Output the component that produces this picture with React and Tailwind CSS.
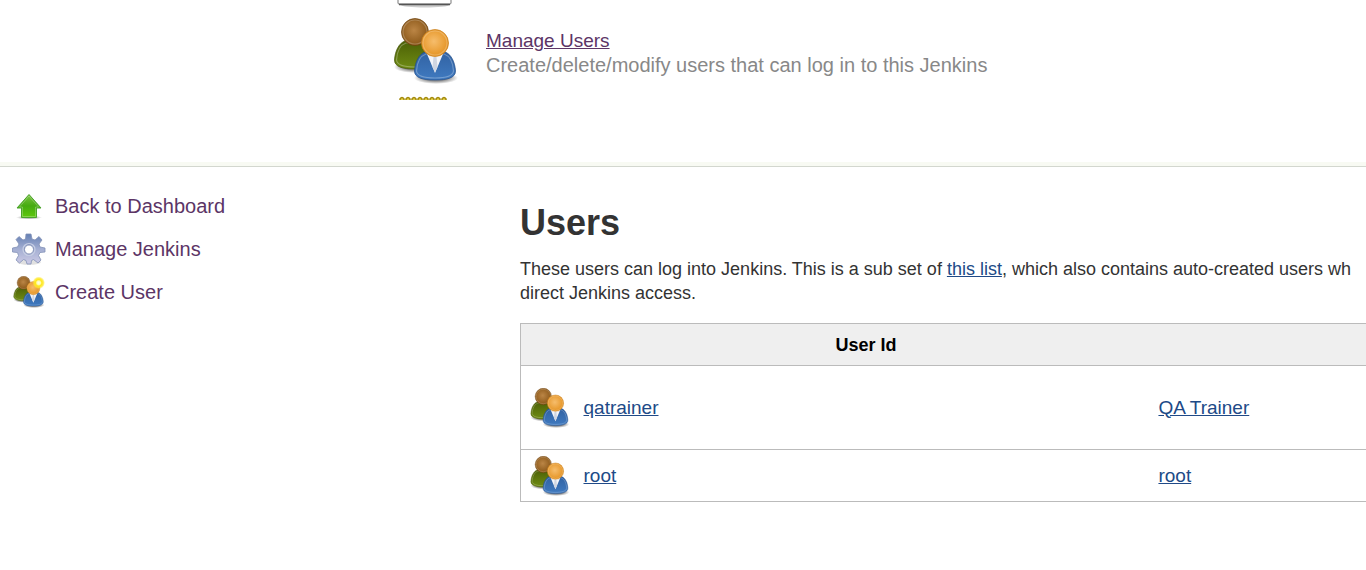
import { useId } from 'react';

function Person({ x, y, head, rim, body, edge, tie, id }) {
  return (
    <g transform={`translate(${x} ${y})`}>
      <path
        d="M-20.500 42C-20 33-16 25-10 23H10C16 25 20 33 20.500 42C20.500 49 12 51 0 51S-20.500 49-20.500 42Z"
        fill={`url(#${id}b)`}
        stroke={edge}
        strokeWidth=".7"
      />
      <path
        d="M-18.500 42C-18 34-15 27-9 25H9C15 27 18 34 18.500 42C18 47 11 49 0 49S-18 47-18.500 42Z"
        fill="none"
        stroke="#fff"
        strokeOpacity=".28"
        strokeWidth="1.200"
      />
      {tie && <path d="M-8 25L0 44L8 25Z" fill="#f3f5fa" />}
      {tie && <path d="M-1.500 28H1.500L2.500 38L0 43L-2.500 38Z" fill="#d0d6e2" />}
      <circle cx="0" cy="14" r="13.500" fill={`url(#${id}h)`} stroke={rim} strokeWidth=".7" />
      <circle cx="0" cy="14" r="12" fill="none" stroke="#fff" strokeOpacity=".22" strokeWidth="1.200" />
      <defs>
        <radialGradient id={`${id}h`} cx=".46" cy=".44" r=".55">
          <stop offset="0" stopColor={head[0]} />
          <stop offset="1" stopColor={head[1]} />
        </radialGradient>
        <linearGradient id={`${id}b`} x1="0" y1="0" x2="0" y2="1">
          <stop offset="0" stopColor={body[0]} />
          <stop offset="1" stopColor={body[1]} />
        </linearGradient>
      </defs>
    </g>
  );
}

function UsersIcon({ className, star }) {
  const id = useId();
  return (
    <svg className={className} viewBox="0 0 64 66" aria-hidden="true">
      <defs>
        <radialGradient id={`${id}s`}>
          <stop offset=".5" stopColor="#000" stopOpacity=".45" />
          <stop offset="1" stopColor="#000" stopOpacity="0" />
        </radialGradient>
        <radialGradient id={`${id}y`}>
          <stop offset="0" stopColor="#fffff0" />
          <stop offset=".3" stopColor="#fffbb0" />
          <stop offset=".5" stopColor="#ffe81c" />
          <stop offset=".75" stopColor="#ffe92e" stopOpacity=".8" />
          <stop offset="1" stopColor="#ffe92e" stopOpacity="0" />
        </radialGradient>
      </defs>
      <ellipse cx="20" cy="49" rx="20" ry="6" fill={`url(#${id}s)`} />
      <ellipse cx="42" cy="60" rx="22" ry="6" fill={`url(#${id}s)`} />
      <Person x={21} y={0} head={['#bb8545', '#8a5718']} rim="#6b400b" body={['#4c6006', '#6f8c14']} edge="#425205" id={`${id}1`} />
      <Person x={41} y={11} head={['#f6bd6c', '#e59424']} rim="#c77b16" body={['#3162a3', '#3f7ac0']} edge="#204a87" tie id={`${id}2`} />
      {star && <circle cx="52" cy="14" r="13" fill={`url(#${id}y)`} />}
    </svg>
  );
}

function UpArrowIcon() {
  return (
    <svg className="h-9 w-9" viewBox="0 0 36 36" aria-hidden="true">
      <defs>
        <linearGradient id="arrowFill" x1="0" y1="0" x2="0" y2="1">
          <stop offset="0" stopColor="#7cc244" />
          <stop offset=".5" stopColor="#45ab10" />
          <stop offset="1" stopColor="#5fc80e" />
        </linearGradient>
        <radialGradient id="arrowShade">
          <stop offset="0" stopColor="#000" stopOpacity=".5" />
          <stop offset="1" stopColor="#000" stopOpacity="0" />
        </radialGradient>
      </defs>
      <ellipse cx="18" cy="29.500" rx="13" ry="2" fill="url(#arrowShade)" />
      <path d="M18 6.500L30 20H25.500V29.500H10.500V20H6Z" fill="url(#arrowFill)" stroke="#4ba32c" strokeLinejoin="round" />
      <path d="M18 8L27.500 19H24.500V28.500H11.500V19H8.500Z" fill="none" stroke="#fff" strokeOpacity=".25" />
    </svg>
  );
}

function GearIcon() {
  return (
    <svg className="h-9 w-9" viewBox="0 0 36 36" aria-hidden="true">
      <defs>
        <linearGradient id="gearFill" x1="0" y1="0" x2="0" y2="1">
          <stop offset="0" stopColor="#6580b3" />
          <stop offset=".5" stopColor="#a3aed2" />
          <stop offset="1" stopColor="#cdcbe6" />
        </linearGradient>
      </defs>
      <ellipse cx="18" cy="31" rx="12" ry="3" fill="#000" fillOpacity=".12" />
      <path
        d="M15 3H20L21 8L24 9L28 5.500L31 9L28 13L29 16L34 17V21L29 21.500L27.500 24.500L30 29L27 32L22.500 28.500L20.500 29.500L20 33H16L15 29.500L12.500 28.500L8.500 32L5 29L7.500 24.500L6.500 21.500L1.500 21V17L6.500 16L8 13L5 8.500L8 5.500L12 9L14.500 8Z"
        fill="url(#gearFill)"
        stroke="#8190b6"
        strokeWidth=".8"
        strokeLinejoin="round"
      />
      <circle cx="18" cy="18.500" r="6" fill="none" stroke="#c6cee4" strokeWidth="1.200" />
      <circle cx="18" cy="18.500" r="4.500" fill="#fff" stroke="#7383ab" strokeWidth=".8" />
    </svg>
  );
}

const tasks = [
  { label: 'Back to Dashboard', icon: <UpArrowIcon /> },
  { label: 'Manage Jenkins', icon: <GearIcon /> },
  { label: 'Create User', icon: <UsersIcon className="h-8 w-9" star /> },
];

const users = [
  { id: 'qatrainer', name: 'QA Trainer', row: 'h-[84px]' },
  { id: 'root', name: 'root', row: 'h-[52px]' },
];

const link = 'text-[#204a87] underline';

export default function App() {
  return (
    <div className="overflow-hidden bg-white font-['Liberation_Sans',Arial,sans-serif] text-[18px] leading-6 text-[#333]">
      <section className="flex gap-7 pb-[62px] pl-[394px]">
        <div className="flex w-16 shrink-0 flex-col">
          <svg className="ml-[3px] h-2 w-14" viewBox="0 0 56 8" aria-hidden="true">
            <ellipse cx="28" cy="5" rx="24" ry="2.500" fill="#000" fillOpacity=".2" />
            <path d="M1 0V3Q1 4 2 4H53Q54 4 54 3V0" fill="#fff" stroke="#777" strokeWidth="1" />
            <path d="M2 4.500H53" stroke="#555" strokeWidth="1.500" />
          </svg>
          <UsersIcon className="mt-[10px] h-[66px] w-16" />
          <svg className="mt-3 ml-[5px] h-1 w-12" viewBox="0 0 48 4" aria-hidden="true">
            {[0, 1, 2, 3, 4, 5, 6, 7].map((n) => (
              <path key={n} d={`M${n * 6 + 1} 4V3Q${n * 6 + 3} 0 ${n * 6 + 5} 3V4`} fill="#e6d24a" stroke="#a38a0c" strokeWidth="1.500" />
            ))}
          </svg>
        </div>
        <div className="pt-[29px]">
          <a href="#users" className="block w-fit text-[19px] text-[#5c3566] underline">Manage Users</a>
          <p className="text-[20px] text-[#888]">Create/delete/modify users that can log in to this Jenkins</p>
        </div>
      </section>

      <div className="border-t-4 border-[#f8faf3]">
        <div className="flex border-t border-[#d3d7cf] pt-[21px]">
          <nav className="flex w-[520px] shrink-0 flex-col gap-[7px] pl-[11px]">
            {tasks.map(({ label, icon }) => (
              <a key={label} href="#task" className="flex h-9 w-fit items-center gap-2 text-[20px] text-[#5c3566]">
                {icon}
                {label}
              </a>
            ))}
          </nav>

          <main className="min-w-0 flex-1">
            <h1 className="pt-[13px] text-[36px] leading-[44px] font-bold">Users</h1>
            <p className="mt-3 whitespace-nowrap">
              These users can log into Jenkins. This is a sub set of <a href="#people" className={link}>this list</a>, which also contains auto-created users wh
              <br />
              direct Jenkins access.
            </p>
            <table className="mt-[18px] w-full table-fixed border-collapse border border-r-0 border-[#bbb]">
              <colgroup>
                <col className="w-[53px]" />
                <col className="w-[68%]" />
                <col />
              </colgroup>
              <thead>
                <tr className="h-[42px] border-b border-[#bbb] bg-[#efefef] text-black">
                  <td />
                  <th scope="col" className="pl-[10px]">User Id</th>
                  <td />
                </tr>
              </thead>
              <tbody>
                {users.map(({ id, name, row }) => (
                  <tr key={id} className={`${row} border-b border-[#bbb] text-[19px]`}>
                    <td className="pl-[9px]"><UsersIcon className="h-10 w-10" /></td>
                    <td className="pl-[10px]"><a href="#user" className={link}>{id}</a></td>
                    <td className="pl-[10px]"><a href="#user" className={link}>{name}</a></td>
                  </tr>
                ))}
              </tbody>
            </table>
          </main>
        </div>
      </div>
    </div>
  );
}
